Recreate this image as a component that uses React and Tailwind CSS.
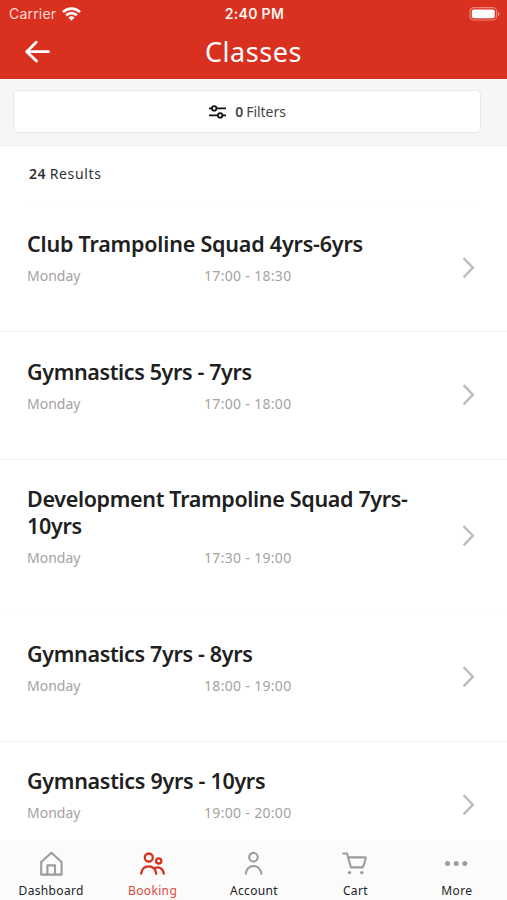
const classes = [
  { title: "Club Trampoline Squad 4yrs-6yrs", spacing: "tracking-[-0.2px]", time: "17:00 - 18:30", height: "h-[127px]", pad: "pt-[25px]", border: "border-transparent" },
  { title: "Gymnastics 5yrs - 7yrs", spacing: "tracking-[-0.37px]", time: "17:00 - 18:00", height: "h-[128px]", pad: "pt-[26px]", border: "border-[#f2f2f2]" },
  { title: "Development Trampoline Squad 7yrs-10yrs", spacing: "tracking-[-0.33px]", time: "17:30 - 19:00", height: "h-[154px]", pad: "pt-[25px]", border: "border-[#f2f2f2]" },
  { title: "Gymnastics 7yrs - 8yrs", spacing: "tracking-[-0.33px]", time: "18:00 - 19:00", height: "h-[128px]", pad: "pt-[26px]", border: "border-[#fafafa]" },
  { title: "Gymnastics 9yrs - 10yrs", spacing: "tracking-[-0.3px]", time: "19:00 - 20:00", height: "h-[127px]", pad: "pt-[25px]", border: "border-[#f2f2f2]" },
];

function StatusBar() {
  return (
    <div className="grid h-[27px] grid-cols-3 items-center pl-[9px] pr-[7px] font-['Inter',sans-serif] text-[14px]">
      <div className="flex items-center gap-[6px] text-[#ffdcd5]">
        <span className="tracking-[0.2px]">Carrier</span>
        <svg width="19" height="14" viewBox="0 0 19 14" fill="none" stroke="#fff" strokeWidth="2.6">
          <path d="M1 5.1a12.2 12.2 0 0 1 17 0" />
          <path d="M4.1 8.3a7.7 7.7 0 0 1 10.8 0" />
          <path d="M9.5 13.8 6.4 10.6a4.5 4.5 0 0 1 6.2 0Z" fill="#fff" stroke="none" />
        </svg>
      </div>
      <span className="text-center font-semibold tracking-[0.3px] text-[#fff4f1]">2:40 PM</span>
      <svg className="justify-self-end" width="31" height="14" viewBox="0 0 31 14" fill="none">
        <rect x="1" y=".6" width="26.5" height="12.4" rx="3.8" stroke="#ec8478" strokeWidth="1.2" />
        <rect x="2.8" y="2.4" width="22.9" height="8.8" rx="2" fill="#fff" />
        <path d="M29 4.8c2 .8 2 3.6 0 4.4Z" fill="#f0988d" />
      </svg>
    </div>
  );
}

function Chevron() {
  return (
    <svg className="mb-px shrink-0" width="14" height="22" viewBox="0 0 14 22" fill="none" stroke="#bdbdbd" strokeWidth="2.4">
      <path d="m1.6 1.2 9.3 9.5-9.3 9.6" />
    </svg>
  );
}

function ClassRow({ item }) {
  return (
    <li className={`flex shrink-0 items-center border-t pl-[27px] pr-[31px] ${item.height} ${item.border}`}>
      <div className={`flex h-full flex-1 flex-col ${item.pad}`}>
        <h2 className={`w-[400px] text-[21.5px] font-semibold leading-[27px] text-[#202020] ${item.spacing}`}>{item.title}</h2>
        <div className="mt-[9px] flex text-[14px] leading-[20px] text-[#a3a3a3]">
          <span className="w-[177px]">Monday</span>
          <span className="tracking-[0.32px]">{item.time}</span>
        </div>
      </div>
      <Chevron />
    </li>
  );
}

const tabs = [
  {
    label: "Dashboard",
    icon: (
      <>
        <path d="M3.2 12 13.4 2.7 23.6 12v12.6H3.2Z" />
        <path d="M9.4 24.3v-8.9h7.6v8.9" />
      </>
    ),
  },
  {
    label: "Booking",
    active: true,
    icon: (
      <g strokeWidth="2.3">
        <circle cx="9.8" cy="7.5" r="4" />
        <circle cx="19.7" cy="10.9" r="2.6" />
        <path d="M2.2 23.7c.4-4.3 3.3-7.4 7.5-7.4s7.3 3.1 7.5 7.4M15.7 18.2c4.2-2.2 8.7.2 9 5.5" />
      </g>
    ),
  },
  {
    label: "Account",
    icon: (
      <>
        <circle cx="13.4" cy="7.2" r="4.3" />
        <path d="M5.8 23.8c.2-4.6 3.4-7.8 7.7-7.8s7.6 3.2 7.9 7.8" />
      </>
    ),
  },
  {
    label: "Cart",
    icon: (
      <>
        <path d="M1.3 3.5H5l3.9 13.9h11.3q.8 0 1-.8l2.6-8.1q.3-1.1-.8-1.1H6.2" />
        <circle cx="7.5" cy="22.6" r="1.7" fill="currentColor" stroke="none" />
        <circle cx="19.8" cy="22.6" r="1.7" fill="currentColor" stroke="none" />
      </>
    ),
  },
  {
    label: "More",
    icon: (
      <g fill="currentColor" stroke="none">
        <circle cx="4.6" cy="13.4" r="2.5" />
        <circle cx="13.2" cy="13.4" r="2.5" />
        <circle cx="21.8" cy="13.4" r="2.5" />
      </g>
    ),
  },
];

function TabBar() {
  return (
    <nav className="grid h-[60px] shrink-0 grid-cols-5 bg-[#fbfbfb]">
      {tabs.map((tab) => (
        <div key={tab.label} className={`flex flex-col items-center pt-[10px] ${tab.active ? "text-[#d8301f]" : "text-[#9c9c9c]"}`}>
          <svg width="26" height="28" viewBox="0 0 26 28" fill="none" stroke="currentColor" strokeWidth="2.1" strokeLinecap="round" strokeLinejoin="round">
            {tab.icon}
          </svg>
          <span className={`mt-[4px] pl-px text-[12px] leading-[18px] tracking-[0.35px] ${tab.active ? "text-[#dc493b]" : "text-[#222]"}`}>{tab.label}</span>
        </div>
      ))}
    </nav>
  );
}

export default function App() {
  return (
    <div className="flex h-[900px] w-[507px] flex-col overflow-hidden bg-white font-['Noto_Sans',sans-serif]">
      <header className="h-[79px] shrink-0 bg-[#d93020]">
        <StatusBar />
        <div className="grid h-[50px] grid-cols-[60px_1fr_60px] items-center text-white">
          <svg className="ml-[24px]" width="28" height="24" viewBox="0 0 28 24" fill="none" stroke="currentColor" strokeWidth="2.8" strokeLinecap="round" strokeLinejoin="round">
            <path d="M12.2 2.3 2.7 11.7l9.8 9.4M2.7 11.7h21.8" />
          </svg>
          <h1 className="text-center text-[27px] leading-[36px] tracking-[0.55px]">Classes</h1>
        </div>
      </header>
      <div className="h-[67px] shrink-0 border-b border-[#efeff1] bg-[#f6f6f9] pl-[13px] pr-[26px] pt-[11px]">
        <button className="flex h-[43px] w-full items-center justify-center rounded-[5px] border border-[#e8e8eb] bg-white text-[14px] text-[#444]">
          <svg className="mr-[8px]" width="19" height="16" viewBox="0 0 19 16" fill="none" stroke="#111" strokeWidth="1.8">
            <path d="M1 4.4h3M8.4 4.4H18M1 11.4h9M14.4 11.4H18" />
            <circle cx="6.2" cy="4.4" r="2.2" />
            <circle cx="12.2" cy="11.4" r="2.2" />
          </svg>
          <span className="mr-[3px] font-semibold">0</span>
          <span className="tracking-[-0.05px]">Filters</span>
        </button>
      </div>
      <div className="mx-[27px] h-[58px] shrink-0 border-b border-[#fcfcfc] pl-[2px] pt-[18px] text-[14px] leading-[20px] text-[#303030]">
        <span className="font-semibold tracking-[0.5px]">24</span> <span className="tracking-[0.65px]">Results</span>
      </div>
      <ul className="flex min-h-0 flex-1 flex-col overflow-hidden">
        {classes.map((item) => (
          <ClassRow key={item.title} item={item} />
        ))}
      </ul>
      <TabBar />
    </div>
  );
}
